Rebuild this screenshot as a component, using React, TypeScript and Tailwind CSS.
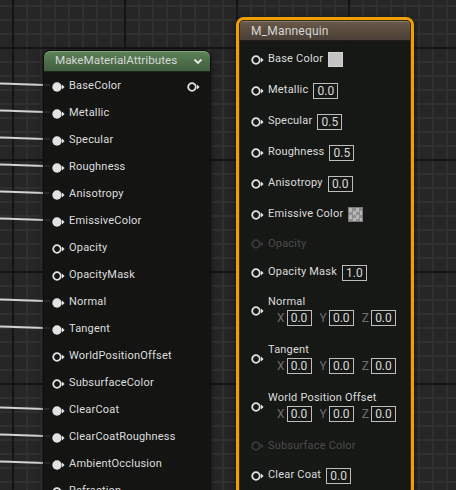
import { ReactNode } from "react"

const leftRows = [
  { label: "BaseColor", wired: true },
  { label: "Metallic", wired: true },
  { label: "Specular", wired: true },
  { label: "Roughness", wired: true },
  { label: "Anisotropy", wired: true },
  { label: "EmissiveColor", wired: true },
  { label: "Opacity", wired: false },
  { label: "OpacityMask", wired: false },
  { label: "Normal", wired: true },
  { label: "Tangent", wired: true },
  { label: "WorldPositionOffset", wired: false },
  { label: "SubsurfaceColor", wired: false },
  { label: "ClearCoat", wired: true },
  { label: "ClearCoatRoughness", wired: true },
  { label: "AmbientOcclusion", wired: true },
  { label: "Refraction", wired: false },
]

function Pin({ filled = false, dim = false }: { filled?: boolean; dim?: boolean }) {
  const c = dim ? "#3a3a3a" : "#e2e2e2"
  return (
    <svg width="13" height="10" viewBox="0 0 13 10" className="shrink-0">
      {filled ? (
        <circle cx="5" cy="5" r="4.7" fill={c} />
      ) : (
        <circle cx="5" cy="5" r="3.8" fill="none" stroke={c} strokeWidth="1.8" />
      )}
      <polygon points="10,2.6 12.6,5 10,7.4" fill={c} />
    </svg>
  )
}

function Box({ value }: { value: string }) {
  return (
    <div className="w-[25px] h-[16px] border border-[#bdbdbd] text-center text-[12px] leading-[14px] text-[#dadada]">
      {value}
    </div>
  )
}

function Row({ label, h, dim, children }: { label: string; h: string; dim?: boolean; children?: ReactNode }) {
  return (
    <div className={`flex items-center gap-[4px] pl-[11px] ${h}`}>
      <Pin dim={dim} />
      <span className={`text-[11px] tracking-[0.2px] ${dim ? "text-[#4c4c4c]" : "text-[#dcdcdc]"}`}>{label}</span>
      {children && <div className="ml-[1px]">{children}</div>}
    </div>
  )
}

function VecRow({ label }: { label: string }) {
  return (
    <div className="flex items-center gap-[4px] pl-[11px] h-[48px]">
      <Pin />
      <div className="flex flex-col">
        <span className="h-[14px] text-[11px] leading-[14px] tracking-[0.2px] text-[#dcdcdc]">{label}</span>
        <div className="flex items-center h-[18px] pl-[9px]">
          {["X", "Y", "Z"].map((a, i) => (
            <div key={a} className={`flex items-center gap-[2px] ${i > 0 ? "ml-[8px]" : ""}`}>
              <span className="text-[12px] text-[#6e6e6e]">{a}</span>
              <Box value="0.0" />
            </div>
          ))}
        </div>
      </div>
    </div>
  )
}

export default function App() {
  return (
    <div
      className="relative w-[456px] h-[490px] overflow-hidden bg-[#262626] [background-image:linear-gradient(to_right,#151515_2px,transparent_2px),linear-gradient(to_bottom,#151515_2px,transparent_2px),linear-gradient(to_right,#303030_2px,transparent_2px),linear-gradient(to_bottom,#303030_2px,transparent_2px)] [background-size:112px_112px,112px_112px,14px_14px,14px_14px] [background-position:12px_47px]"
      style={{ fontFamily: "Roboto, 'Noto Sans', sans-serif" }}
    >
      {/* wires into MakeMaterialAttributes */}
      <svg className="absolute inset-0" width="456" height="490">
        {leftRows.map((r, i) =>
          r.wired ? (
            <path
              key={r.label}
              d={`M0 ${83.5 + i * 27} C 18 ${83.5 + i * 27}, 28 ${85 + i * 27}, 50 ${85 + i * 27}`}
              stroke="#d2d2d2"
              strokeWidth="2"
              fill="none"
            />
          ) : null
        )}
      </svg>

      {/* MakeMaterialAttributes */}
      <div className="absolute left-[43px] top-[50px] w-[168px] h-[460px] rounded-t-[7px] border border-[#0e0e0e] bg-[#131412]/90 shadow-[0_2px_6px_rgba(0,0,0,0.5)]">
        <div className="flex items-center justify-between h-[21px] pl-[11px] pr-[7px] rounded-t-[6px] bg-[linear-gradient(to_bottom,#5d8459,#4a6c47_60%,#445f42)] shadow-[inset_0_1px_0_rgba(255,255,255,0.25)] border-b border-[#1c261b]">
          <span className="text-[11.7px] text-[#d6d6d6]">MakeMaterialAttributes</span>
          <svg width="10" height="7" viewBox="0 0 10 7">
            <polyline points="1.5,1.5 5,5 8.5,1.5" fill="none" stroke="#e8e8e8" strokeWidth="1.8" />
          </svg>
        </div>
        <div className="pt-[1px]">
          {leftRows.map((r, i) => (
            <div key={r.label} className="flex items-center gap-[4px] h-[27px] pl-[8px] pr-[10px]">
              <Pin filled={r.wired} />
              <span className="text-[11px] tracking-[0.2px] text-[#dedede]">{r.label}</span>
              {i === 0 && (
                <div className="ml-auto">
                  <Pin />
                </div>
              )}
            </div>
          ))}
        </div>
      </div>

      {/* M_Mannequin (selected) */}
      <div className="absolute left-[236px] top-[17px] w-[178px] h-[490px] rounded-[8px] border-[3px] border-[#f0a000] shadow-[0_2px_6px_rgba(0,0,0,0.5)]">
        <div className="h-full rounded-[5px] border border-[#3a2d10] bg-[#151714]/90">
          <div className="flex items-center h-[20px] pl-[11px] rounded-t-[4px] bg-[linear-gradient(to_bottom,#6a5b4c,#56483a_60%,#4a4038)] shadow-[inset_0_1px_0_rgba(255,255,255,0.2)] border-b border-[#231d16]">
            <span className="text-[12px] text-[#d6d6d6] tracking-[0.2px]">M_Mannequin</span>
          </div>
          <div className="pt-[3px]">
            <Row label="Base Color" h="h-[31px]">
              <div className="w-[15px] h-[15px] bg-[#c4c4c4] border border-[#d2d2d2]" />
            </Row>
            <Row label="Metallic" h="h-[31px]">
              <Box value="0.0" />
            </Row>
            <Row label="Specular" h="h-[31px]">
              <Box value="0.5" />
            </Row>
            <Row label="Roughness" h="h-[31px]">
              <Box value="0.5" />
            </Row>
            <Row label="Anisotropy" h="h-[31px]">
              <Box value="0.0" />
            </Row>
            <Row label="Emissive Color" h="h-[31px]">
              <div className="w-[15px] h-[15px] border border-[#7a7a7a] [background:repeating-conic-gradient(#8e8e8e_0_25%,#b6b6b6_0_50%)_0_0/7px_7px]" />
            </Row>
            <Row label="Opacity" h="h-[28px]" dim />
            <Row label="Opacity Mask" h="h-[29px]">
              <Box value="1.0" />
            </Row>
            <VecRow label="Normal" />
            <VecRow label="Tangent" />
            <VecRow label="World Position Offset" />
            <Row label="Subsurface Color" h="h-[30px]" dim />
            <Row label="Clear Coat" h="h-[29px]">
              <Box value="0.0" />
            </Row>
          </div>
        </div>
      </div>
    </div>
  )
}
